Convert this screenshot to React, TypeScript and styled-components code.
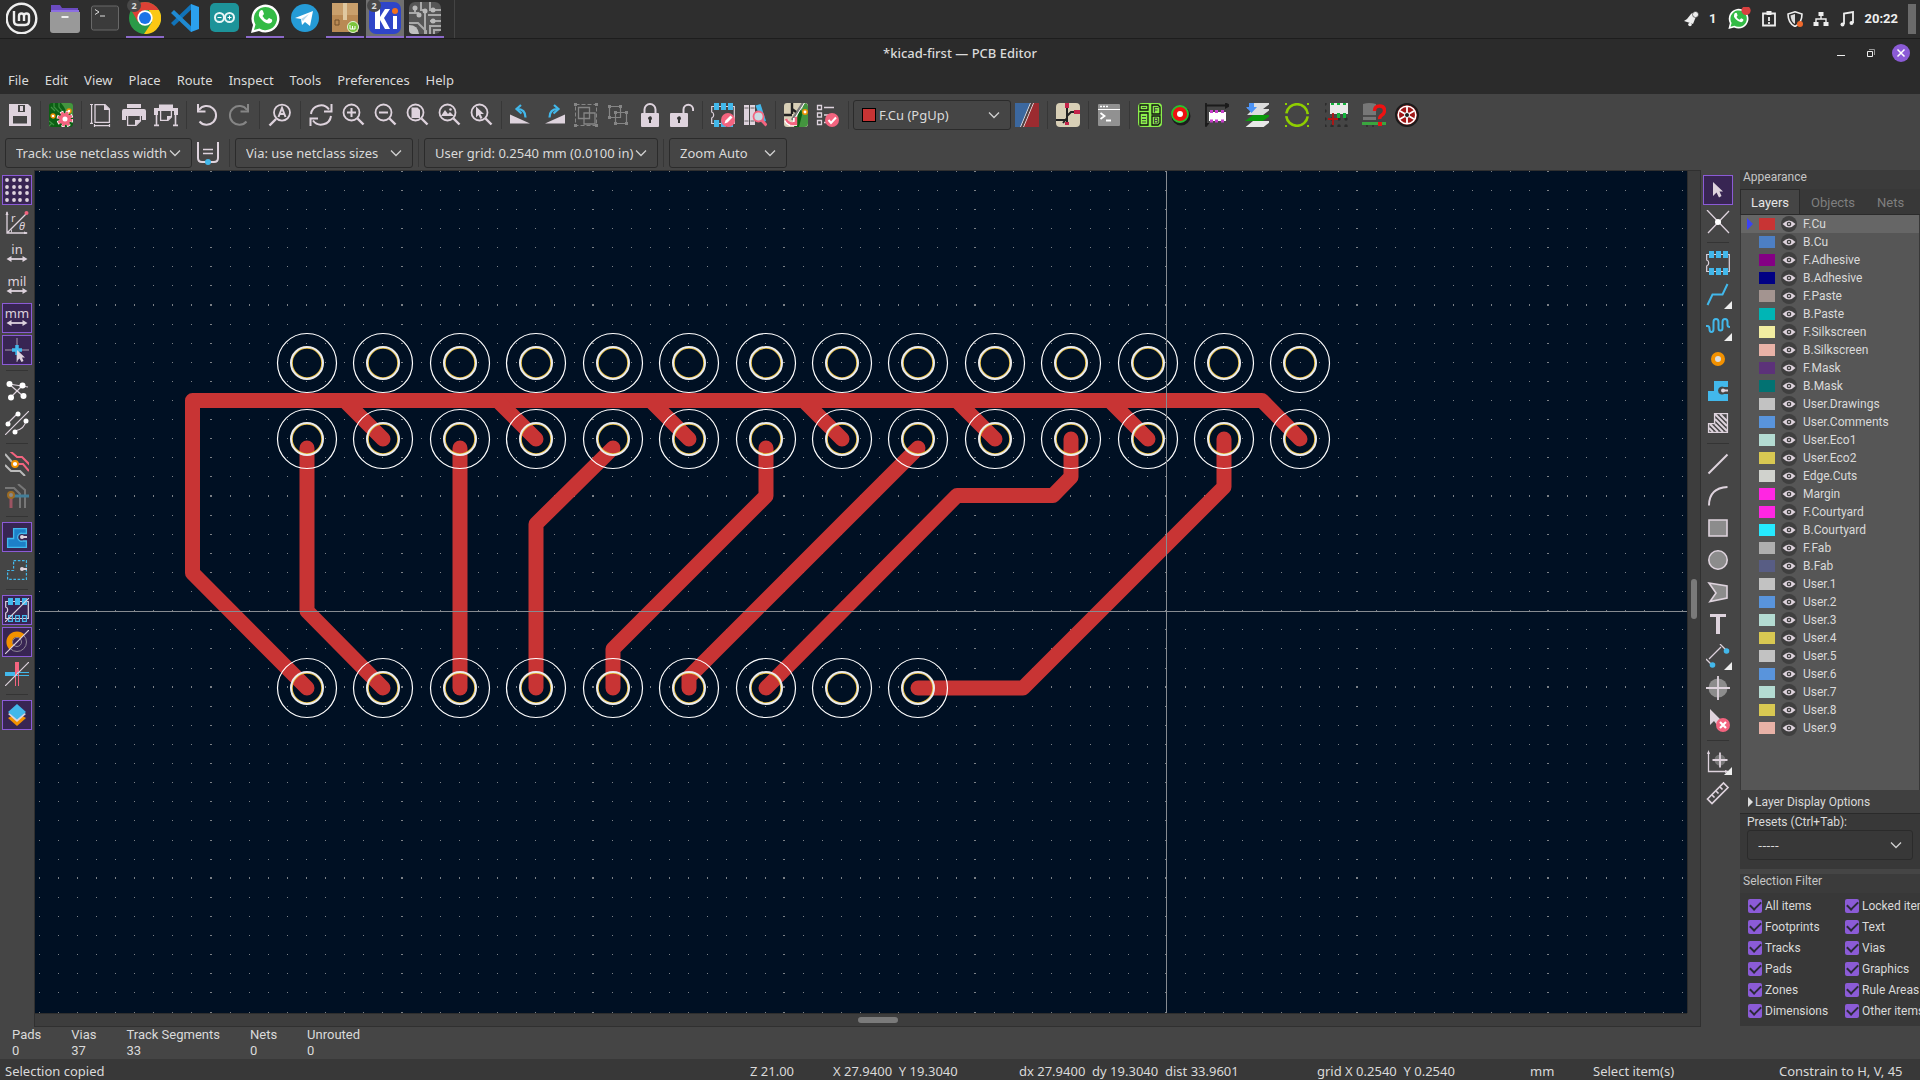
import React, { ReactNode } from "react";
import styled, { createGlobalStyle, css } from "styled-components";

const L = "#ded3dd";
const B = "#42b8eb";
const R = "#f3647f";
const O = "#f29100";
const D = "#858585";

const wide = `"Noto Sans", "Open Sans", "Liberation Sans", sans-serif`;
const compact = `Roboto, "Liberation Sans", sans-serif`;

const GlobalStyle = createGlobalStyle`
  * { box-sizing: border-box; }
  body { margin: 0; background: #454545; }
  body, button, select, input {
    font-family: ${wide};
    font-size: 13px;
    color: #dadada;
  }
  button { border: 0; background: none; padding: 0; margin: 0; }
`;

/* ---------- shell ---------- */

const Shell = styled.div`
  display: flex;
  flex-direction: column;
  height: 100vh;
  overflow: hidden;
  line-height: 16px;
`;

const Taskbar = styled.header`
  display: flex;
  align-items: stretch;
  justify-content: space-between;
  height: 39px;
  flex: none;
  background: #2e2e2e;
  border-bottom: 1px solid #1d1d1d;
`;

const Launchers = styled.div`
  display: flex;
  gap: 2px;
`;

const Launcher = styled.button<{ $running?: boolean; $active?: boolean; $menu?: boolean }>`
  position: relative;
  width: ${(p) => (p.$menu ? 44 : 38)}px;
  display: flex;
  align-items: flex-start;
  justify-content: center;
  padding-top: 2px;
  background: ${(p) => (p.$active ? "#707070" : "transparent")};
  border-bottom: 2px solid ${(p) => (p.$running ? "#8b69c8" : "transparent")};
`;

const CountBadge = styled.span`
  position: absolute;
  left: 1px;
  top: -1px;
  width: 14px;
  height: 13px;
  border-radius: 7px;
  background: #484848;
  font-size: 9px;
  line-height: 14px;
  font-weight: 700;
  text-align: center;
`;

const PanelDivider = styled.span`
  width: 1px;
  margin-left: 8px;
  background: #444;
`;

const Tray = styled.div`
  display: flex;
  align-items: center;
  gap: 10px;
  padding-right: 4px;
  font-family: ${compact};
  font-weight: 700;
  color: #eee;
`;

const ShowDesktop = styled.button`
  width: 8px;
  height: 30px;
  background: #6b6b6b;
`;

const TrayText = styled.span``;

const TitleBar = styled.div`
  display: grid;
  grid-template-columns: 1fr auto 1fr;
  align-items: center;
  height: 27px;
  flex: none;
  background: #2b2b2b;
`;

const Title = styled.h1`
  grid-column: 2;
  margin: 0;
  font-size: 13px;
  font-weight: 500;
`;

const WindowButtons = styled.div`
  display: flex;
  justify-content: flex-end;
  gap: 12px;
  padding-right: 10px;
`;

const WindowButton = styled.button<{ $close?: boolean }>`
  width: 18px;
  height: 18px;
  border-radius: 9px;
  display: grid;
  place-items: center;
  background: ${(p) => (p.$close ? "#8b5bd6" : "none")};
`;

const MenuBar = styled.nav`
  display: flex;
  align-items: center;
  gap: 16px;
  height: 28px;
  flex: none;
  padding: 0 8px;
  background: #2b2b2b;
`;

/* ---------- toolbars ---------- */

const Toolbar = styled.div<{ $height: number; $inset?: number }>`
  display: flex;
  align-items: center;
  height: ${(p) => p.$height}px;
  flex: none;
  padding-left: ${(p) => p.$inset ?? 4}px;
  background: #454545;
`;

const ToolButton = styled.button<{ $width?: number }>`
  width: ${(p) => p.$width ?? 32}px;
  height: 32px;
  display: grid;
  place-items: center;
`;

const ToolDivider = styled.span<{ $margin?: number }>`
  width: 1px;
  height: 28px;
  margin: 0 ${(p) => p.$margin ?? 4}px;
  background: #373737;
`;

const Chooser = styled.label<{ $width?: number }>`
  display: grid;
  align-items: center;
  width: ${(p) => (p.$width ? p.$width + "px" : "100%")};
  height: 30px;
  border: 1px solid #2b2b2b;
  border-radius: 3px;
  & > * { grid-area: 1 / 1; }
  & > svg { pointer-events: none; }
`;

const ChooserSelect = styled.select<{ $inset?: number }>`
  appearance: none;
  width: 100%;
  height: 28px;
  padding: 0 0 0 ${(p) => p.$inset ?? 10}px;
  border: 0;
  background: none;
`;

const ChooserChevron = styled.svg`
  justify-self: end;
  margin-right: 10px;
`;

const ColorChip = styled.span`
  width: 14px;
  height: 14px;
  margin-left: 8px;
  border: 1px solid #000;
  background: #c83434;
`;

/* ---------- workspace ---------- */

const Workspace = styled.main`
  display: flex;
  flex: 1;
  min-height: 0;
`;

const SideTools = styled.div<{ $right?: boolean }>`
  display: flex;
  flex-direction: column;
  align-items: center;
  width: ${(p) => (p.$right ? 39 : 34)}px;
  flex: none;
  gap: 2px;
  padding: 5px ${(p) => (p.$right ? 5 : 0)}px 0 0;
  background: #454545;
`;

const SideButton = styled.button<{ $on?: boolean }>`
  display: grid;
  place-items: center;
  width: 30px;
  height: 30px;
  flex: none;
  border: 1px solid ${(p) => (p.$on ? "#8b5bd6" : "transparent")};
  background: ${(p) => (p.$on ? "#382553" : "none")};
  & > * { grid-area: 1 / 1; }
`;

const MoreCorner = styled.span`
  place-self: end;
  border: 4px solid transparent;
  border-right-color: #eee;
  border-bottom-color: #eee;
`;

const SideDivider = styled.span`
  width: 22px;
  height: 1px;
  flex: none;
  margin: 3px 0;
  background: #343434;
`;

const CanvasFrame = styled.section`
  display: grid;
  grid-template-columns: 1fr 13px;
  grid-template-rows: 1fr 13px;
  flex: 1;
  min-width: 0;
  border: 1px solid #303030;
  background: #3d3d3d;
`;

const Board = styled.svg`
  display: block;
  width: 100%;
  height: 100%;
  background: #001023;
`;

const ScrollTrack = styled.div<{ $vertical?: boolean }>`
  display: flex;
  align-items: center;
  ${(p) => p.$vertical && css`flex-direction: column;`}
  border-${(p) => (p.$vertical ? "left" : "top")}: 1px solid #2d2d2d;
`;

const ScrollSpace = styled.span<{ $grow: number }>`
  flex: ${(p) => p.$grow};
`;

const ScrollThumb = styled.span<{ $vertical?: boolean }>`
  width: ${(p) => (p.$vertical ? 6 : 40)}px;
  height: ${(p) => (p.$vertical ? 40 : 6)}px;
  border-radius: 3px;
  background: #7a7a7a;
`;

/* ---------- right dock ---------- */

const Dock = styled.aside`
  display: flex;
  flex-direction: column;
  gap: 5px;
  width: 180px;
  flex: none;
  overflow: hidden;
  padding-bottom: 1px;
  font-family: ${compact};
  font-size: 12px;
  & button { font-family: ${compact}; font-size: 12px; }
`;

const Pane = styled.section<{ $grow?: boolean }>`
  display: flex;
  flex-direction: column;
  flex: ${(p) => (p.$grow ? "1" : "none")};
  min-height: 0;
  background: #383838;
`;

const PaneCaption = styled.h2`
  margin: 0;
  padding: 0 3px;
  height: 19px;
  flex: none;
  line-height: 14px;
  font-size: 12px;
  font-weight: 400;
  color: #c6c6c6;
  background: #3b3b3b;
`;

const TabStrip = styled.div`
  display: flex;
  flex: none;
  height: 26px;
  border-bottom: 1px solid #2b2b2b;
`;

const Tab = styled.button<{ $on?: boolean }>`
  && { font-size: 13px; }
  padding: 0 10px;
  color: ${(p) => (p.$on ? "#e6e6e6" : "#7f7f7f")};
  background: ${(p) => (p.$on ? "#454545" : "none")};
  border: 1px solid ${(p) => (p.$on ? "#2b2b2b" : "transparent")};
  border-bottom: 0;
`;

const LayerList = styled.ul`
  list-style: none;
  flex: 1;
  min-height: 0;
  overflow: hidden;
  margin: 0 1px;
  padding: 0;
  background: #565656;
`;

const LayerRow = styled.li<{ $on?: boolean }>`
  display: grid;
  grid-template-columns: 12px 16px 16px 1fr;
  column-gap: 6px;
  align-items: center;
  height: 18px;
  background: ${(p) => (p.$on ? "#666" : "none")};
`;

const CurrentMark = styled.span<{ $on?: boolean }>`
  justify-self: end;
  border: solid transparent;
  border-width: 6px 0 6px 6px;
  border-left-color: ${(p) => (p.$on ? "#3b42f5" : "transparent")};
`;

const Swatch = styled.span<{ $color: string }>`
  height: 12px;
  background: ${(p) => p.$color};
`;

const EyeButton = styled.button`
  display: grid;
  place-items: center;
  width: 16px;
  height: 16px;
  border-radius: 8px;
  background: #3f3f3f;
`;

const LayerName = styled.span`
  line-height: 18px;
`;

const DisplayOptions = styled.button`
  display: flex;
  align-items: center;
  gap: 2px;
  height: 24px;
  flex: none;
  padding-left: 8px;
  background: #404040;
  border-bottom: 1px solid #2a2a2a;
`;

const Disclosure = styled.span`
  border: solid transparent;
  border-width: 5px 0 5px 5px;
  border-left-color: #ddd;
`;

const Presets = styled.div`
  display: flex;
  flex-direction: column;
  padding: 0 7px 9px;
`;

const FilterGrid = styled.div`
  display: grid;
  grid-template-columns: 97px 97px;
  grid-auto-rows: 21px;
  align-items: center;
  padding: 2px 0 5px 8px;
`;

const FilterLabel = styled.label`
  display: flex;
  align-items: center;
  gap: 3px;
  white-space: nowrap;
`;

const Check = styled.input`
  appearance: none;
  display: grid;
  place-items: center;
  width: 14px;
  height: 14px;
  flex: none;
  margin: 0;
  border-radius: 2px;
  background: #8b5bd6;
  &:checked::before {
    content: "";
    width: 9px;
    height: 5px;
    margin-bottom: 3px;
    border: solid #2b2b38;
    border-width: 0 0 2px 2px;
    transform: rotate(-45deg);
  }
`;

/* ---------- bottom ---------- */

const MessagePanel = styled.dl`
  display: flex;
  gap: 30px;
  height: 32px;
  flex: none;
  margin: 0;
  padding: 0 12px;
  background: #454545;
  font-family: ${compact};
`;

const MessageItem = styled.div``;
const MessageTerm = styled.dt``;
const MessageValue = styled.dd`
  margin: 0;
`;

const StatusBar = styled.footer`
  display: grid;
  grid-template-columns: 1fr 83px 186px 298px 213px 63px 186px 141px;
  align-items: center;
  height: 21px;
  flex: none;
  padding: 2px 0 0 5px;
  background: #383838;
  white-space: pre;
`;

const StatusCell = styled.span``;

/* ---------- icons ---------- */

const Icon = ({ children, size = 24, box = 24 }: { children: ReactNode; size?: number; box?: number }) => (
  <svg width={size} height={size} viewBox={`0 0 ${box} ${box}`} fill="none" aria-hidden="true">
    {children}
  </svg>
);

const Lens = ({ children }: { children?: ReactNode }) => (
  <>
    <circle cx="10.5" cy="9.5" r="8" stroke={L} strokeWidth="1.8" />
    <path d="M16.5 15.5L22.5 21.5" stroke={L} strokeWidth="2.4" />
    {children}
  </>
);

const Footprint = ({ hollow }: { hollow?: boolean }) => (
  <>
    <path d="M.7 3.5H23.3V20.5H.7V15q2-.5 2-3t-2-3z" stroke={L} strokeWidth="1.2" />
    {[3, 10, 17].map((x) => (
      <g key={x}>
        <path d={`M${x} 0h5v7h-5z`} fill={B} />
        {hollow ? <path d={`M${x + 0.6} 17.6h3.8v5.8h-3.8z`} stroke={B} strokeWidth="1.2" /> : <path d={`M${x} 17h5v7h-5z`} fill={B} />}
      </g>
    ))}
  </>
);

const glyphs: Record<string, ReactNode> = {
  save: <><path d="M1 1H20L23 4V23H1z" fill={L} /><path d="M10 2H17V9H10z" fill="#454545" /><path d="M12 3h3v5h-3z" fill={L} /><path d="M5 13H19V20.5H5z" fill="#454545" /></>,
  boardSetup: <><rect x="0" y="0" width="24" height="24" rx="3" fill="#0c5f14" /><path d="M12 0h9a3 3 0 013 3v9l-6-2-3-6z" fill="#44943f" /><path d="M2 4L6 8M5 0v4l5 5M10 0v4l4 5M0 18l5 4M0 23l3-3" stroke="#3f9142" strokeWidth="1.2" /><circle cx="4" cy="13" r="2" fill="#fff" stroke={O} strokeWidth="1.3" /><circle cx="20" cy="8" r="2" fill="#fff" stroke={O} strokeWidth="1.3" /><circle cx="16" cy="16" r="6.4" stroke="#fff" strokeWidth="4" strokeDasharray="3 2" /><circle cx="16" cy="16" r="4.2" stroke={R} strokeWidth="3.4" fill="#fff" /><circle cx="16" cy="16" r="6.2" stroke={R} strokeWidth="2.6" strokeDasharray="2.5 2.37" /></>,
  page: <><path d="M5 1.6H15L19.4 6V19.4H5z" stroke={L} strokeWidth="1.3" /><path d="M14 1L20 7H14z" fill={L} /><path d="M0 1.5H3M1.6 1.5V20M0 20.3H3M4 22.6H20M4.5 21v3M19.5 21v3" stroke={L} strokeWidth="1.2" /></>,
  print: <><path d="M5 1H19V5H5zM2 6H22Q24 6 24 8V17H20V13H4V17H0V8Q0 6 2 6z" fill={L} /><path d="M5.6 13V22.4H14L18.4 18V13" stroke={L} strokeWidth="1.3" fill="#454545" /><path d="M13 23V17H19z" fill={L} /></>,
  plot: <><path d="M5 1.5H19V5H24V12H20V8H4V12H0V5H5z" fill={L} /><path d="M6.6 8V17.4H14L17.4 14V8" stroke={L} strokeWidth="1.3" fill="#454545" /><path d="M13 18v-5h5z" fill={L} /><path d="M2.5 12V22M21.5 12V22M0 22.4H5M19 22.4H24" stroke={L} strokeWidth="1.6" /></>,
  undo: <><path d="M4 7A9.4 9.4 0 1 1 4.5 18.5" stroke={L} strokeWidth="2" /><path d="M3 1V8.5H10.5" stroke={L} strokeWidth="2" /></>,
  redo: <><path d="M20 7A9.4 9.4 0 1 0 19.5 18.5" stroke={D} strokeWidth="2" /><path d="M21 1V8.5H13.5" stroke={D} strokeWidth="2" /></>,
  find: <><circle cx="14" cy="9.6" r="8" stroke={L} strokeWidth="1.8" /><path d="M8 16L1.5 22.5" stroke={L} strokeWidth="2.4" /><path d="M10.5 14L14 5L17.5 14M12 11h4" stroke={L} strokeWidth="2" /></>,
  refresh: <><path d="M2 11A10 10 0 0 1 20 6.5M22 13A10 10 0 0 1 4 17.5" stroke={L} strokeWidth="2" /><path d="M22.5 1V8.5H15M1.5 23V15.5H9" stroke={L} strokeWidth="2" /></>,
  zoomIn: <Lens><path d="M6 9.5h9M10.5 5v9" stroke={L} strokeWidth="2" /></Lens>,
  zoomOut: <Lens><path d="M6 9.5h9" stroke={L} strokeWidth="2" /></Lens>,
  zoomFit: <Lens><path d="M6.5 4.5h6l2.5 2.5v8h-8.5z" fill={L} /></Lens>,
  zoomObjects: <Lens><path d="M4 13L8 7l3 4 2-2 4 4z" fill={L} /><circle cx="13.5" cy="6.5" r="1.3" fill={L} /></Lens>,
  zoomSelection: <Lens><path d="M7 3.5v11l2.5-2.5 2 4 2-1-2-4h3.5z" fill={L} /></Lens>,
  rotateLeft: <><path d="M0 11.5L20 20.5H0z" fill={L} /><path d="M15.500 14.500Q15.500 6 7 6" stroke={B} strokeWidth="2.2" /><path d="M11 2L6.500 6l5 4.500" stroke={B} strokeWidth="2.2" /></>,
  rotateRight: <><path d="M23 11.5L3 20.5H23z" fill={L} /><path d="M7.500 14.500Q7.500 6 16 6" stroke={B} strokeWidth="2.2" /><path d="M12 2L16.500 6l-5 4.500" stroke={B} strokeWidth="2.2" /></>,
  group: <><path d="M1.5 1.5h21v21h-21z" stroke={D} strokeDasharray="4 2" /><path d="M4.5 4.5h11v11h-11zM10 10h11v11H10z" stroke={D} fill="#454545" strokeWidth="1.3" /><path d="M0 0h3v3H0zM21 0h3v3h-3zM0 21h3v3H0zM21 21h3v3h-3z" fill={D} /></>,
  ungroup: <><path d="M3.5 3.5h11v11h-11zM9.5 9.5h11v11h-11z" stroke={D} fill="#454545" strokeWidth="1.2" /><path d="M2 2h3v3H2zM13 2h3v3h-3zM2 13h3v3H2zM8 8h3v3H8zM19 8h3v3h-3zM8 19h3v3H8zM19 19h3v3h-3z" fill={D} /></>,
  lock: <><path d="M6.5 11V6.5a5.5 5.5 0 0 1 11 0V11" stroke={L} strokeWidth="2" /><rect x="3" y="10" width="18" height="14" rx="1" fill={L} /><path d="M10 15.5a2 2 0 1 1 3 1.6V20h-2v-2.9z" fill="#333" /></>,
  unlock: <><path d="M13.5 11V6.500a4.800 4.800 0 0 1 9.600 0V8" stroke={L} strokeWidth="2" /><rect x="0" y="10" width="18" height="14" rx="1" fill={L} /><path d="M7 15.5a2 2 0 1 1 3 1.6V20H8v-2.9z" fill="#333" /></>,
  footprintEdit: <><Footprint /><circle cx="17" cy="17" r="7" fill={R} /><path d="M13.5 20.5l1-3 5-5 2 2-5 5z" fill="#fff" /></>,
  library: <><path d="M1 2h5v20H1zM7 2h5v20H7z" fill={L} /><path d="M1.5 5h4M7.5 5h4M1.5 18h4M7.5 18h4" stroke="#454545" strokeWidth=".8" /><path d="M12.500 2.500l5-1.500 5.500 17-4 2z" fill={B} /><circle cx="15.500" cy="13.500" r="5" fill="#c9dbe3" stroke={R} strokeWidth="1.800" /><path d="M19 17.500l4.500 5" stroke={R} strokeWidth="3" /></>,
  updateBoard: <><rect width="24" height="24" rx="3" fill="#d8cfb6" /><path d="M20 0q4 0 4 4v16q0 4-4 4h-8z" fill="#44943f" /><path d="M17 2L10 24h5l3-12z" fill="#0c5f14" /><path d="M19 0L8 17" stroke="#777" strokeWidth="2.5" /><path d="M20.5 0L9 18" stroke="#fff" strokeWidth="1" /><path d="M8 0v5M8 6l4 3M8 5v6M0 12h8" stroke="#222" strokeWidth="2.4" /><circle cx="21" cy="9" r="2.2" fill="#fff" stroke={O} strokeWidth="1.5" /><path d="M2 17q3 6 9 3M11 15v6H5" stroke="#fff" strokeWidth="4" /><path d="M2 16q3 6 9 4M12 14v7H6" stroke={R} strokeWidth="2.5" /></>,
  drc: <><path d="M1.5 2.5h4v4h-4zM1.5 10h4v4h-4zM1.5 17.5h4v4h-4z" stroke={L} strokeWidth="1.3" /><path d="M8 4.5h10M8 12h5M8 19.5h2" stroke={L} strokeWidth="1.3" /><circle cx="16" cy="17" r="7" fill={R} /><path d="M12.5 17l2.5 3 5-5.5" stroke="#fff" strokeWidth="2" /></>,
  layerPair: <><path d="M0 0H24V24H0z" fill="#9c2b30" /><path d="M0 0H16L6 24H0z" fill="#3c689f" /><path d="M15.5 0L5.5 24M18.5 0L8.5 24" stroke="#ddd" strokeWidth="1" /><path d="M17 0L7 24" stroke="#444" strokeWidth="1.5" /></>,
  schematic: <><rect width="24" height="24" rx="4" fill="#d8cfb6" /><path d="M11 4v13M0 17h11M11 13l4-4h9M7 20l4-5v5" stroke="#222" strokeWidth="2" /><path d="M9 0h4v5H9zM18 7h6v4h-6zM9 19h4v3H9z" fill="#c4234a" /></>,
  console: <><rect x="1" y="1" width="22" height="22" rx="1" fill="#919191" /><path d="M1 6.5h22" stroke="#fff" /><path d="M3 3.5h2M6 3.5h2M9 3.5h2" stroke="#fff" strokeWidth="1.5" /><path d="M3.5 10l4 3-4 3M9 17.5h5" stroke="#fff" strokeWidth="1.8" /></>,
  bom: <><rect x=".5" y=".5" width="23" height="23" rx="3" fill="#8bf04a" stroke="#8bf04a" /><path d="M2 2h8v5H2zM2 10h8v12H2zM14 2h6l2 2v7h-8zM14 13h8v7l-2 2h-6z" stroke="#111" strokeWidth="1.300" /><path d="M4 4.500h4M4 13.500h4M4 16.500h4M4 19h4M16.500 9.500v-5h4M16.500 7h3M16.500 20v-5h2.500q1.500 1.300 0 2.500 2 1.300 0 2.500zM16.500 17.500h2.500" stroke="#444" strokeWidth="1.100" /></>,
  target: <><circle cx="13" cy="13" r="9.5" fill="#1c1c1c" /><circle cx="12" cy="11" r="8" fill="#e11" stroke="#29c22e" strokeWidth="1.8" /><circle cx="12" cy="11" r="3" fill="#fff" /></>,
  position: <><path d="M-3 2.5H22M1 -1V22" stroke="#1b1b1b" strokeWidth="1.8" /><path d="M20-1l6 3.500L20 6zM-2.500 20h7l-3.500 4.500z" fill="#1b1b1b" /><path d="M4 9h17v9H4z" fill="#fff" /><path d="M5 7h3v3H5zM10 7h3v3h-3zM16 7h3v3h-3zM5 16.500h3v3H5zM10 16.500h3v3h-3zM16 16.500h3v3h-3z" fill="#c63fc9" /></>,
  layers: <><path d="M8 0h18L18 6H2zM8 6h18l-8 6H2z" fill="#ddd" /><path d="M8 12h18l-8 6H0z" fill="#0b9a0b" /><path d="M8 18h18l-8 6.5H0z" fill="#e8e8e8" /><path d="M4-1h5v5h3l-5.5 6L1 4h3z" fill="#4e94f5" /></>,
  ring: <><circle cx="12" cy="12" r="10.800" stroke="#8fce00" strokeWidth="2.600" strokeDasharray="31 2.900" strokeDashoffset="-1.500" /><path d="M-1-1h3v3h-3zM22-1h3v3h-3zM-1 22h3v3h-3zM22 22h3v3h-3z" fill="#8fce00" /></>,
  align: <><g fill="#2c2c2c">{[0, 7, 14, 21].map((x) => [1, 8, 16, 23].map((y) => <circle key={x + "-" + y} cx={x} cy={y} r="1.7" />))}</g><path d="M5 0h18v11H5z" fill="#e9e9e9" /><path d="M6-3h3v5H6zM12-3h3v5h-3zM18-3h3v5h-3zM12 10h3v5h-3zM18 10h3v5h-3z" fill="#12b33a" /><path d="M8 10v12M3 16h10" stroke="#b31212" strokeWidth="1.8" /></>,
  unknownPart: <><path d="M1 1q6-2 13 0v16H1z" fill="#777" /><path d="M1 13h13" stroke="#222" /><path d="M0 19h24v3H0z" fill="#3aa53f" /><path d="M5 22v2M11 22v2" stroke="#222" /><path d="M12.5 8q0-5 5-5t5 4.5q0 3-2.5 4.5t-2.3 4" stroke="#e11" strokeWidth="3.4" /><path d="M16 19h4v4h-4z" fill="#e11" /></>,
  wheel: <><circle cx="12" cy="12" r="11" fill="#a01616" stroke="#1b1b1b" strokeWidth="2" /><circle cx="12" cy="12" r="8.8" stroke="#fff" strokeWidth="1.6" /><path d="M12 4v16M5 8l14 8M5 16l14-8" stroke="#fff" strokeWidth="1.8" /><circle cx="12" cy="12" r="2.5" fill="#1b1b1b" stroke="#fff" /></>,
  trackWidth: <><path d="M2 1V17q0 4 4 4H18q4 0 4-4V1" stroke={L} strokeWidth="2" /><path d="M7 8.5h10M7 12.5h10" stroke={L} strokeWidth="1.3" /><circle cx="12" cy="21" r="3" fill={B} /></>,

  grid: <g fill={L}>{[2, 9, 15, 22].map((x) => [2, 9, 15, 22].map((y) => <circle key={x + "-" + y} cx={x} cy={y} r="1.9" />))}</g>,
  polar: <><path d="M2 2V23H22M2 23L21 4" stroke={L} strokeWidth="1.3" /><path d="M.5 5L2 1l1.5 4zM19 21.5l4 1.5-4 1.5zM6 23q2-2 0-4" fill={L} /><circle cx="21.5" cy="3" r="2" fill={R} /><text x="6" y="12" fontSize="11" fill={L}>r</text><text x="14" y="20" fontSize="11" fontStyle="italic" fill={L}>θ</text></>,
  inches: <Unit label="in" />,
  mils: <Unit label="mil" />,
  mm: <Unit label="mm" />,
  cursorShape: <><path d="M12 0V24M0 12H24" stroke="#a79fb0" strokeWidth="1" /><path d="M12 7V17M7 12H17" stroke={B} strokeWidth="3.5" /><path d="M12 12v11l2.5-2.5L16.5 24l2-1-1.5-3.5h3z" fill={L} /></>,
  ratsnest: <><path d="M4 5L23 8M5 19L17 7M4 5L18 17" stroke={L} strokeWidth="1.2" /><g fill="#fff"><circle cx="4.5" cy="5" r="3" /><circle cx="17.5" cy="6.5" r="3" /><circle cx="6" cy="18.5" r="3" /><circle cx="18.5" cy="17" r="3" /></g></>,
  curvedRats: <><path d="M3 12L12 3M10 20q10-2 11-11M0 24L24 0" stroke={L} strokeWidth="1.2" /><g fill="#fff"><circle cx="3" cy="13" r="2.5" /><circle cx="13" cy="3" r="2.5" /><circle cx="10" cy="21" r="2.5" /><circle cx="21" cy="10" r="2.5" /></g></>,
  inactive: <><path d="M0 2l7 8M0 13l6 6h9l5 5" stroke="#bbb" strokeWidth="2" /><path d="M5-1l7 6h5l8 8M10 12h8l6 7" stroke={R} strokeWidth="2" /><circle cx="10" cy="12" r="3" fill="#fff" stroke={O} strokeWidth="1.8" /></>,
  netHighlight: <g opacity=".5"><path d="M0 4h9l6 6v14M13 0l7 6v18" stroke="#aaa" strokeWidth="2" /><path d="M7 12h17" stroke={B} strokeWidth="3" /><path d="M6 12v12" stroke={R} strokeWidth="3" /><circle cx="6" cy="11" r="3" fill="#ccc" stroke={O} strokeWidth="2" /></g>,
  zoneFill: <><path d="M8.6 3.6H21.4V8.5H18a4 4 0 1 0 0 7.5H21.4V22.4H2.6V13.5H8.6z" fill="#1d80c8" stroke={B} strokeWidth="1.3" /><circle cx="17" cy="12" r="2" fill={L} /><path d="M17 12h5" stroke={L} strokeWidth="2" /></>,
  zoneOutline: <><path d="M8.6 3.6H21.4V22.4H2.6V13.5H8.6z" stroke={B} strokeWidth="1.2" strokeDasharray="2.6 1.6" /><circle cx="17" cy="12" r="2" fill={L} /><path d="M17 12h5" stroke={L} strokeWidth="2" /></>,
  sketchPads: <><Footprint hollow /><path d="M0 24L24 0" stroke={L} strokeWidth="1.2" /></>,
  sketchVias: <><circle cx="12" cy="12" r="9.5" stroke="#8d8694" /><circle cx="12" cy="12" r="4.5" stroke="#8d8694" /><path d="M4.5 19.5A10 10 0 0 1 19.5 4.5L15.5 8.5A4.5 4.5 0 0 0 8.5 15.5z" fill={O} /><path d="M0 24L24 0" stroke={L} strokeWidth="1.2" /></>,
  sketchTracks: <><path d="M0 12h11" stroke={B} strokeWidth="4" /><path d="M12 0v12" stroke={R} strokeWidth="4" /><path d="M12 10.5h12M10 13.5h14" stroke={B} /><path d="M10.5 12v12M13.5 12v12" stroke={R} /><path d="M0 24L24 0" stroke={L} strokeWidth="1.2" /></>,
  layersManager: <><path d="M3 15l9 8 9-8-9-5z" fill={O} /><path d="M3 11l9 8 9-8-9-5z" fill={L} /><path d="M12 1l9 8-9 7.5L3 9z" fill={B} /></>,

  select: <path d="M7 4v14l3.5-3.5 2.5 5 2.5-1.5-2-4.5H17z" fill={L} />,
  localRats: <><path d="M1 0L23 23M23 1L2 23" stroke={L} strokeWidth="1.3" /><circle cx="12" cy="12" r="3" fill="#fff" /></>,
  footprint: <Footprint />,
  route: <path d="M1.5 22L6.5 11.500H16.500L21.500 1" stroke={B} strokeWidth="2" />,
  tune: <path d="M0 11h1.500q2 0 2 3 0 3 2 3t2-3V7q0-3 2.500-3t2.500 3v6q0 2.500 2 2.500t2-2.500V7q0-3 2.500-3t2.500 3v3q0 2 2.500 2" stroke={B} strokeWidth="2" />,
  via: <circle cx="12" cy="12" r="5" stroke={O} strokeWidth="4" fill="#ddd" />,
  zone: <><path d="M8 2H22V8H18a4 4 0 1 0 0 7H22V22H2V12H8z" fill={B} /><circle cx="17" cy="11.5" r="2" fill={L} /><path d="M17 11.5h5" stroke={L} strokeWidth="2" /></>,
  keepout: <><path d="M8.6 2.6H21.4V21.4H2.6V12.6H8.6z" stroke={L} strokeWidth="1.4" /><path d="M9 3L21 15M9 8L21 20M14 3l7 7M9 13l8 8M4 13l8 8M3 17l4 4" stroke={L} strokeWidth="2" /></>,
  line: <path d="M2.5 21.5L21.5 2.5" stroke={L} strokeWidth="2" />,
  arc: <path d="M3 21.5Q3 4 21.5 3" stroke={L} strokeWidth="2" />,
  rect: <path d="M3 4H21V20H3z" fill="#8c8c8c" stroke={L} strokeWidth="1.6" />,
  circle: <circle cx="12" cy="12" r="9.2" fill="#8c8c8c" stroke={L} strokeWidth="1.6" />,
  polygon: <path d="M3 3L21 6V18L4 21.5L10 13z" fill="#8c8c8c" stroke={L} strokeWidth="1.6" />,
  text: <path d="M4 2H20V5H14V22H10V5H4z" fill={L} />,
  dimension: <><path d="M3 15L15 3M0 15l5 5M14 0l6 6" stroke={L} strokeWidth="1.3" /><circle cx="6.5" cy="21" r="2.8" fill={B} /><circle cx="20.5" cy="7" r="2.8" fill={B} /></>,
  origin: <><circle cx="12" cy="12" r="9.500" fill="#8c8c8c" /><path d="M12 0V24M0 12H24" stroke={L} strokeWidth="1.8" /></>,
  erase: <><path d="M4 1v16l4-4 3 4 5-4z" fill={L} /><circle cx="17" cy="17" r="7" fill={R} /><path d="M14 14l6 6M20 14l-6 6" stroke="#fff" strokeWidth="2.2" /></>,
  gridOrigin: <><path d="M2.5 3V22.5H22" stroke={L} strokeWidth="1.3" /><path d="M1 5L2.500 1 4 5zM19 21l4 1.5-4 1.5z" fill={L} /><circle cx="14" cy="11" r="5.5" fill="#777" /><path d="M14 3.5V18.5M6.5 11H21.5" stroke={L} strokeWidth="1.8" /></>,
  measure: <><path d="M1.5 18L17.5 2L22 6.5L6 22.5z" stroke={L} strokeWidth="1.7" /><path d="M6 14l2.5 2.5M10 10l2.5 2.5M14 6l2.5 2.5" stroke={L} strokeWidth="1.7" /></>,
};

function Unit({ label }: { label: string }) {
  return (
    <>
      <text x="12" y="12" fontSize="13" textAnchor="middle" fill={L}>{label}</text>
      <path d="M5 17h14" stroke={L} strokeWidth="1.8" />
      <path d="M1.5 17l5-3v6zM22.5 17l-5-3v6z" fill={L} />
    </>
  );
}

const apps: { id: string; name: string; running?: boolean; active?: boolean; count?: number; art: ReactNode }[] = [
  { id: "files", name: "Files", art: <><path d="M2 3h9l2 3h16v5H2z" fill="#6b4bc0" /><path d="M2 8h28v2H2z" fill="#8c6fe0" /><path d="M1 10h30v18q0 3-3 3H4q-3 0-3-3z" fill="#999" /><path d="M12.500 15h7" stroke="#eee" strokeWidth="2" /></> },
  { id: "terminal", name: "Terminal", art: <><rect x="2.500" y="4" width="27" height="24" rx="2" fill="#3b3b3b" stroke="#686868" /><path d="M6 7.500l4 2.500-4 2.500M11 14h5" stroke="#ddd" /></> },
  { id: "chrome", name: "Chrome", running: true, count: 2, art: <><circle cx="16" cy="16" r="16" fill="#2b9a48" /><path d="M2.200 8A16 16 0 0 1 29.900 8H16L9 20z" fill="#dd4135" /><path d="M29.900 8A16 16 0 0 1 15 32L23 20 20 8z" fill="#fbc814" /><circle cx="16" cy="16" r="7.700" fill="#fff" /><circle cx="16" cy="16" r="6" fill="#1a73e8" /></> },
  { id: "code", name: "VS Code", art: <><path d="M2 21L22 2l3 3L5 24z" fill="#1173b9" /><path d="M2 11L22 30l3-3L5 8z" fill="#1f8ad2" /><path d="M22 2l8 3v22l-8 3z" fill="#2ba0ee" /></> },
  { id: "arduino", name: "Arduino", art: <><rect x="1" y="1" width="29" height="29" rx="5" fill="#1d9399" /><circle cx="10.500" cy="15.500" r="4.500" stroke="#e8f6f6" strokeWidth="2" /><circle cx="20.500" cy="15.500" r="4.500" stroke="#e8f6f6" strokeWidth="2" /><path d="M8.500 15.500h4M18.500 15.500h4M20.500 13.500v4" stroke="#fff" /></> },
  { id: "whatsapp", name: "WhatsApp", running: true, art: <WhatsApp /> },
  { id: "telegram", name: "Telegram", art: <><circle cx="16" cy="16" r="14" fill="#259bd6" /><path d="M6 16L24 9l-3 15-5-4-3 3-1-6z" fill="#fff" /><path d="M12 17l8-5-6 7z" fill="#b8d9ec" /></> },
  { id: "packages", name: "Package Manager", running: true, art: <><path d="M3 1h26v29H3z" fill="#b98a54" /><path d="M3 1h26v12H3z" fill="#c9a06c" /><path d="M14 1h4v17h-4z" fill="#e0c9a0" /><path d="M6 18h4v5H6z" stroke="#73502a" /><circle cx="24" cy="25" r="5.500" fill="#7cc53e" stroke="#e6f5d8" /><path d="M21 23v4h5v-3M23.500 24v3" stroke="#fff" /></> },
  { id: "kicad", name: "KiCad", running: true, active: true, count: 2, art: <><rect width="32" height="32" rx="7" fill="#2f45c8" /><path d="M6 7h5v8l5-8h5l-6 9 6 11h-5l-5-9v9H6zM24 14h4v13h-4z" fill="#fff" /><circle cx="26" cy="9" r="3" fill="#f3701c" /></> },
  { id: "pcb", name: "PCB Editor", running: true, art: <><rect width="32" height="32" rx="6" fill="#565656" /><path d="M0 11h10M6 11V4M12 0v8h4v24M21 0v8h11M19 13h13M21 19h11M0 21h9l8 8v3M21 32v-8h11M25 32v-4h7" stroke="#a9a9a9" strokeWidth="2" /><path d="M0 23q9 0 10 9H4q-4 0-4-4z" fill="#c0c0c0" /><g fill="#b9b9b9"><circle cx="6" cy="6" r="2.500" /><circle cx="10" cy="13" r="2.500" /><circle cx="16" cy="9" r="2.500" /><circle cx="24" cy="8" r="2.500" /><circle cx="24" cy="19" r="2.500" /></g></> },
];

function WhatsApp() {
  return (
    <>
      <path d="M2 31l2-8A14 14 0 1 1 10 29z" fill="#fff" />
      <path d="M5 28l1.500-5.500A11.600 11.600 0 1 1 10.500 26.500z" fill="#34bb46" />
      <path d="M11 9q2-2 3 0l1 3-1.500 2q1.500 3 4.500 4l2-2 3 1.500q1 3-3 4-4 0-7.500-4T10 12q0-2 1-3z" fill="#fff" />
    </>
  );
}

/* ---------- toolbar models ---------- */

type Tool = [id: string, title: string, width?: number] | null;

const mainTools: Tool[] = [
  ["save", "Save"], null, ["boardSetup", "Board Setup"], null,
  ["page", "Page Settings"], ["print", "Print"], ["plot", "Plot"], null,
  ["undo", "Undo"], ["redo", "Redo"], null, ["find", "Find"], null,
  ["refresh", "Refresh"], ["zoomIn", "Zoom In"], ["zoomOut", "Zoom Out"], ["zoomFit", "Zoom to Fit"],
  ["zoomObjects", "Zoom to Objects"], ["zoomSelection", "Zoom to Selection"], null,
  ["rotateLeft", "Rotate Left"], ["rotateRight", "Rotate Right"], ["group", "Group"], ["ungroup", "Ungroup"],
  ["lock", "Lock"], ["unlock", "Unlock"], null,
  ["footprintEdit", "Footprint Editor"], ["library", "Library Browser"], null,
  ["updateBoard", "Update PCB"], ["drc", "Design Rules Checker"], null,
];

const pluginTools: Tool[] = [
  ["layerPair", "Layer Pair"], null, ["schematic", "Schematic Editor"], null,
  ["console", "Scripting Console"], null, ["bom", "Interactive BOM"],
  ["target", "Via Tool", 28], ["position", "Placement", 46], ["layers", "Fabrication", 34], ["ring", "Round Tracks", 46],
  ["align", "Align to Grid", 34], ["unknownPart", "Part Finder", 40], ["wheel", "Teardrops", 26],
];

type SideTool = { id: string; on?: boolean; more?: boolean } | null;

const leftTools: SideTool[] = [
  { id: "grid", on: true }, { id: "polar" }, { id: "inches" }, { id: "mils" }, { id: "mm", on: true }, { id: "cursorShape", on: true }, null,
  { id: "ratsnest" }, { id: "curvedRats" }, null, { id: "inactive" }, { id: "netHighlight" }, null,
  { id: "zoneFill", on: true }, { id: "zoneOutline" }, null,
  { id: "sketchPads", on: true }, { id: "sketchVias", on: true }, { id: "sketchTracks" }, null, { id: "layersManager", on: true },
];

const rightTools: SideTool[] = [
  { id: "select", on: true }, { id: "localRats" }, null,
  { id: "footprint" }, { id: "route", more: true }, { id: "tune", more: true }, { id: "via" }, { id: "zone" }, { id: "keepout" }, null,
  { id: "line" }, { id: "arc" }, { id: "rect" }, { id: "circle" }, { id: "polygon" }, { id: "text" },
  { id: "dimension", more: true }, { id: "origin" }, { id: "erase" }, null,
  { id: "gridOrigin", more: true }, { id: "measure" },
];

const layers: [string, string][] = [
  ["F.Cu", "#c83434"], ["B.Cu", "#4d7fc4"], ["F.Adhesive", "#840084"], ["B.Adhesive", "#000084"],
  ["F.Paste", "#a39490"], ["B.Paste", "#00b5b5"], ["F.Silkscreen", "#f2eda1"], ["B.Silkscreen", "#e8b2a7"],
  ["F.Mask", "#5c3279"], ["B.Mask", "#027272"], ["User.Drawings", "#c2c2c2"], ["User.Comments", "#5994dc"],
  ["User.Eco1", "#b4dbd2"], ["User.Eco2", "#d8c852"], ["Edge.Cuts", "#d0d2cd"], ["Margin", "#ff26e2"],
  ["F.Courtyard", "#ff26e2"], ["B.Courtyard", "#26e9ff"], ["F.Fab", "#afafaf"], ["B.Fab", "#585d84"],
  ["User.1", "#c2c2c2"], ["User.2", "#5994dc"], ["User.3", "#b4dbd2"], ["User.4", "#d8c852"], ["User.5", "#c2c2c2"],
  ["User.6", "#5994dc"], ["User.7", "#b4dbd2"], ["User.8", "#d8c852"], ["User.9", "#e8b2a7"],
];

const filters = [
  "All items", "Locked items", "Footprints", "Text", "Tracks", "Vias",
  "Pads", "Graphics", "Zones", "Rule Areas", "Dimensions", "Other items",
];

const messages: [string, string][] = [["Pads", "0"], ["Vias", "37"], ["Track Segments", "33"], ["Nets", "0"], ["Unrouted", "0"]];

/* ---------- board drawing ---------- */

const PITCH = 19.11;

// Every tenth row and column of the grid is drawn one pixel thicker.
const gridPath = (() => {
  let d = "";
  for (let i = -9; i < 190; i++) {
    const w = i % 10 === 0 ? 2 : 1;
    const x = Math.round(175.5 + i * PITCH) + 1 - w;
    for (let j = -7; j < 110; j++) {
      const h = j % 10 === 0 ? 2 : 1;
      const y = Math.round(133.5 + j * PITCH) + 1 - h;
      d += `M${x} ${y}h${w}v${h}h-${w}z`;
    }
  }
  return d;
})();

const padX = (i: number) => Math.round(272 + i * 76.42);
const TOP = 192;
const MID = 268;
const LOW = 517;

const vias: [number, number][] = [
  ...Array.from({ length: 14 }, (_, i): [number, number] => [padX(i), TOP]),
  ...Array.from({ length: 14 }, (_, i): [number, number] => [padX(i), MID]),
  ...Array.from({ length: 9 }, (_, i): [number, number] => [padX(i), LOW]),
];

const tracks = [
  `M${padX(0)} ${LOW}L157.5 402V229.5H1227L${padX(13)} ${MID}`,
  ...[1, 3, 5, 7, 9, 11].map((i) => `M${padX(i) - 38} 230L${padX(i)} ${MID}`),
  `M${padX(0)} 277V440L${padX(1)} ${LOW}`,
  `M${padX(2)} 277V${LOW}`,
  `M${padX(4)} 277L${padX(3)} 353V${LOW}`,
  `M${padX(6)} 277V325L${padX(4)} 478V${LOW}`,
  `M${padX(8)} 277L${padX(5)} 506V${LOW}`,
  `M${padX(10)} ${MID}V306L1018 324.5H922L${padX(6)} ${LOW}`,
  `M${padX(12)} ${MID}V316L988 ${LOW}H${padX(8)}`,
];

const BoardView = () => (
  <Board role="img" aria-label="Board layout">
    <path d={gridPath} fill="#7c8187" shapeRendering="crispEdges" />
    <g stroke="#c83434" strokeWidth="15" strokeLinecap="round" strokeLinejoin="round" fill="none">
      {tracks.map((d) => <path key={d} d={d} />)}
    </g>
    <g fill="none">
      {vias.map(([x, y]) => (
        <g key={`${x}-${y}`}>
          <circle cx={x} cy={y} r="29.5" stroke="#fff" strokeWidth="1.2" />
          <circle cx={x} cy={y} r="14.8" stroke="#e3b72e" strokeWidth="1.2" />
          <circle cx={x} cy={y} r="16" stroke="#ececec" strokeWidth="2" />
        </g>
      ))}
    </g>
    <path d="M1131 0h1v4000h-1zM0 440h4000v1H0z" fill="#868b91" />
  </Board>
);

/* ---------- pieces ---------- */

const Chevron = () => (
  <ChooserChevron width="12" height="8" viewBox="0 0 12 8" fill="none" aria-hidden="true">
    <path d="M1 1.5l5 5 5-5" stroke="#d0d0d0" strokeWidth="1.3" />
  </ChooserChevron>
);

const Choice = ({ value, name, width, inset, chip }: { value: string; name: string; width?: number; inset?: number; chip?: boolean }) => (
  <Chooser $width={width}>
    <ChooserSelect aria-label={name} $inset={inset} defaultValue={value}>
      <option>{value}</option>
    </ChooserSelect>
    {chip && <ColorChip />}
    <Chevron />
  </Chooser>
);

const Tools = ({ items }: { items: Tool[] }) => (
  <>
    {items.map((t, i) =>
      t ? (
        <ToolButton key={t[0]} aria-label={t[1]} $width={t[2]}><Icon>{glyphs[t[0]]}</Icon></ToolButton>
      ) : (
        <ToolDivider key={i} />
      )
    )}
  </>
);

const SideToolbar = ({ items, right }: { items: SideTool[]; right?: boolean }) => (
  <SideTools $right={right}>
    {items.map((t, i) =>
      t ? (
        <SideButton key={t.id} aria-label={t.id} $on={t.on}>
          <Icon>{glyphs[t.id]}</Icon>
          {t.more && <MoreCorner />}
        </SideButton>
      ) : (
        <SideDivider key={i} />
      )
    )}
  </SideTools>
);

const Eye = () => (
  <svg width="14" height="10" viewBox="0 0 14 10" aria-hidden="true">
    <path d="M0.5 5Q7-2 13.5 5Q7 12 0.5 5z" fill={L} />
    <circle cx="7" cy="5" r="2.3" fill="#3f3f3f" />
    <circle cx="7" cy="5" r="1" fill={L} />
  </svg>
);

const SystemTray = () => (
  <Tray>
    <Icon size={16} box={16}><path d="M1 10l3-2 4-5q2-2 4 0 2 2 0 5l-2 5z" fill="#eee" /><circle cx="12.500" cy="3.500" r="3" fill="#eee" stroke="#2e2e2e" strokeWidth=".6" /><circle cx="7" cy="13.500" r="1.800" fill="#eee" /></Icon>
    <TrayText>1</TrayText>
    <Icon size={24} box={34}><WhatsApp /><circle cx="27" cy="5" r="6.500" fill="#d9403f" /></Icon>
    <Icon size={16} box={16}><path d="M2 2.5h12v12H2z" stroke="#eee" strokeWidth="1.8" /><path d="M5.5 0h5v4h-5z" fill="#eee" /><path d="M8 6v4M8 11v2" stroke="#eee" strokeWidth="1.8" /></Icon>
    <Icon size={16} box={16}><path d="M8 .8L15 3q0 9-7 12.500Q1 12 1 3z" stroke="#eee" strokeWidth="1.600" /><path d="M8 3v10Q4 11 3.500 4.500z" fill="#ddd" /><circle cx="13" cy="13" r="3" fill="#f0692c" /></Icon>
    <Icon size={16} box={16}><path d="M8 4v4M3 12V8h10v4" stroke="#eee" strokeWidth="1.4" /><path d="M5.5 1h5v4h-5zM.5 11h5v4h-5zM10.5 11h5v4h-5z" fill="#eee" /></Icon>
    <Icon size={16} box={16}><path d="M5 13V2.5L14 1v11" stroke="#eee" strokeWidth="1.8" /><circle cx="3.5" cy="13.5" r="2" fill="#eee" /><circle cx="12.5" cy="12" r="2" fill="#eee" /></Icon>
    <TrayText>20:22</TrayText>
    <ShowDesktop aria-label="Show desktop" />
  </Tray>
);

export default function App() {
  return (
    <Shell>
      <GlobalStyle />
      <Taskbar>
        <Launchers>
          <Launcher $menu aria-label="Menu">
            <Icon size={32} box={32}>
              <circle cx="15.500" cy="16.500" r="14.800" stroke="#eee" strokeWidth="2.400" />
              <path d="M8 9V19q0 4 4 4h7q4 0 4-4V14q0-2.500-2.500-2.500T18 14v5M18 14q0-2.500-2.500-2.500T13 14v5" stroke="#eee" strokeWidth="2.400" />
            </Icon>
          </Launcher>
          {apps.map((a) => (
            <Launcher key={a.id} aria-label={a.name} $running={a.running} $active={a.active}>
              <Icon size={32} box={32}>{a.art}</Icon>
              {a.count && <CountBadge>{a.count}</CountBadge>}
            </Launcher>
          ))}
          <PanelDivider />
        </Launchers>
        <SystemTray />
      </Taskbar>

      <TitleBar>
        <Title>*kicad-first — PCB Editor</Title>
        <WindowButtons>
          <WindowButton aria-label="Minimize"><Icon size={10} box={10}><path d="M1 7.5h8" stroke="#eee" /></Icon></WindowButton>
          <WindowButton aria-label="Restore"><Icon size={10} box={10}><path d="M1.5 3.5h5v5h-5z" stroke="#eee" /><path d="M3 1.5h5.5V7" stroke="#999" /></Icon></WindowButton>
          <WindowButton $close aria-label="Close"><Icon size={10} box={10}><path d="M1.5 1.5l7 7M8.5 1.5l-7 7" stroke="#fff" strokeWidth="1.5" /></Icon></WindowButton>
        </WindowButtons>
      </TitleBar>

      <MenuBar>
        {["File", "Edit", "View", "Place", "Route", "Inspect", "Tools", "Preferences", "Help"].map((m) => (
          <button key={m}>{m}</button>
        ))}
      </MenuBar>

      <Toolbar $height={42}>
        <Tools items={mainTools} />
        <Choice name="Active layer" value="F.Cu (PgUp)" width={158} inset={25} chip />
        <Tools items={pluginTools} />
      </Toolbar>
      <Toolbar $height={34} $inset={5}>
        <Choice name="Track width" value="Track: use netclass width" width={187} />
        <ToolButton aria-label="Use existing track width"><Icon>{glyphs.trackWidth}</Icon></ToolButton>
        <ToolDivider $margin={5} />
        <Choice name="Via size" value="Via: use netclass sizes" width={178} />
        <ToolDivider $margin={5} />
        <Choice name="Grid" value="User grid: 0.2540 mm (0.0100 in)" width={234} />
        <ToolDivider $margin={5} />
        <Choice name="Zoom" value="Zoom Auto" width={118} />
      </Toolbar>

      <Workspace>
        <SideToolbar items={leftTools} />
        <CanvasFrame>
          <BoardView />
          <ScrollTrack $vertical>
            <ScrollSpace $grow={408} /><ScrollThumb $vertical /><ScrollSpace $grow={394} />
          </ScrollTrack>
          <ScrollTrack>
            <ScrollSpace $grow={823} /><ScrollThumb /><ScrollSpace $grow={789} />
          </ScrollTrack>
        </CanvasFrame>
        <SideToolbar items={rightTools} right />
        <Dock>
          <Pane $grow>
            <PaneCaption>Appearance</PaneCaption>
            <TabStrip role="tablist">
              <Tab role="tab" $on>Layers</Tab>
              <Tab role="tab">Objects</Tab>
              <Tab role="tab">Nets</Tab>
            </TabStrip>
            <LayerList>
              {layers.map(([name, color], i) => (
                <LayerRow key={name} $on={i === 0}>
                  <CurrentMark $on={i === 0} />
                  <Swatch $color={color} />
                  <EyeButton aria-label={`Toggle ${name}`}><Eye /></EyeButton>
                  <LayerName>{name}</LayerName>
                </LayerRow>
              ))}
            </LayerList>
            <DisplayOptions><Disclosure />Layer Display Options</DisplayOptions>
            <Presets>
              <label htmlFor="presets">Presets (Ctrl+Tab):</label>
              <Chooser as="div">
                <ChooserSelect id="presets"><option>-----</option></ChooserSelect>
                <Chevron />
              </Chooser>
            </Presets>
          </Pane>
          <Pane>
            <PaneCaption>Selection Filter</PaneCaption>
            <FilterGrid>
              {filters.map((f) => (
                <FilterLabel key={f}><Check type="checkbox" defaultChecked />{f}</FilterLabel>
              ))}
            </FilterGrid>
          </Pane>
        </Dock>
      </Workspace>

      <MessagePanel>
        {messages.map(([k, v]) => (
          <MessageItem key={k}><MessageTerm>{k}</MessageTerm><MessageValue>{v}</MessageValue></MessageItem>
        ))}
      </MessagePanel>
      <StatusBar>
        <StatusCell>Selection copied</StatusCell>
        <StatusCell>Z 21.00</StatusCell>
        <StatusCell>{"X 27.9400  Y 19.3040"}</StatusCell>
        <StatusCell>{"dx 27.9400  dy 19.3040  dist 33.9601"}</StatusCell>
        <StatusCell>{"grid X 0.2540  Y 0.2540"}</StatusCell>
        <StatusCell>mm</StatusCell>
        <StatusCell>Select item(s)</StatusCell>
        <StatusCell>Constrain to H, V, 45</StatusCell>
      </StatusBar>
    </Shell>
  );
}
